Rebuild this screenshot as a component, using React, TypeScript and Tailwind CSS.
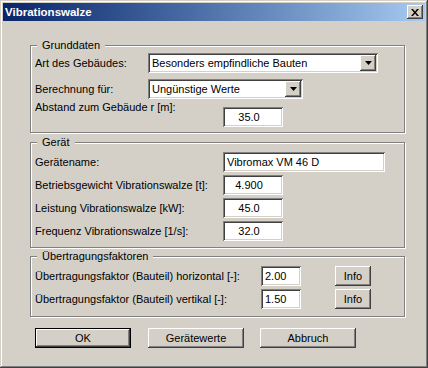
import React from 'react';

// Win2000 style 3D edges
const raised =
  'shadow-[inset_-1px_-1px_0_#404040,inset_1px_1px_0_#ffffff,inset_-2px_-2px_0_#808080,inset_2px_2px_0_#d4d0c8]';
const sunken =
  'shadow-[inset_1px_1px_0_#808080,inset_-1px_-1px_0_#ffffff,inset_2px_2px_0_#404040,inset_-2px_-2px_0_#d4d0c8]';

const Group = ({ title, className, children }: { title: string; className?: string; children: React.ReactNode }) => (
  <div
    className={`relative w-[375px] border border-[#808080] shadow-[1px_1px_0_#ffffff,inset_1px_1px_0_#ffffff] ${className ?? ''}`}
  >
    <span className="absolute -top-[8px] left-[6px] bg-[#d4d0c8] px-[5px] leading-[14px]">{title}</span>
    {children}
  </div>
);

const Field = ({ value, w, align = 'left' }: { value: string; w: string; align?: 'left' | 'center' }) => (
  <div
    className={`${w} h-[20px] bg-white ${sunken} flex items-center ${
      align === 'center' ? 'justify-center pr-[8px]' : 'pl-[4px]'
    }`}
  >
    {value}
  </div>
);

const Combo = ({ value, w }: { value: string; w: string }) => (
  <div className={`${w} h-[20px] bg-white ${sunken} flex items-center pl-[4px] pr-[2px]`}>
    <span className="flex-1">{value}</span>
    <div className={`w-[16px] h-[16px] bg-[#d4d0c8] ${raised} flex items-center justify-center`}>
      <svg width="7" height="4" viewBox="0 0 7 4">
        <path d="M0 0h7L3.5 4z" fill="#000" />
      </svg>
    </div>
  </div>
);

const Button = ({ label, isDefault }: { label: string; isDefault?: boolean }) =>
  isDefault ? (
    <div className="w-[96px] h-[20px] border border-black">
      <div className={`w-full h-full bg-[#d4d0c8] ${raised} flex items-center justify-center`}>{label}</div>
    </div>
  ) : (
    <div className={`w-[96px] h-[20px] bg-[#d4d0c8] ${raised} flex items-center justify-center`}>{label}</div>
  );

const InfoButton = () => (
  <div className="ml-[34px]">
    <div className={`w-[36px] h-[20px] bg-[#d4d0c8] ${raised} flex items-center justify-center`}>Info</div>
  </div>
);

const Row = ({ label, lw, className, children }: { label: string; lw: string; className?: string; children: React.ReactNode }) => (
  <div className={`flex items-center ${className ?? ''}`}>
    <span className={`${lw} shrink-0`}>{label}</span>
    {children}
  </div>
);

export default function App() {
  return (
    <div
      className="relative w-[428px] h-[368px] bg-[#d4d0c8] p-[3px] text-[11px] leading-[13px] text-black shadow-[inset_-1px_-1px_0_#404040,inset_1px_1px_0_#d4d0c8,inset_-2px_-2px_0_#808080,inset_2px_2px_0_#ffffff]"
      style={{ fontFamily: '"Liberation Sans", Arial, sans-serif' }}
    >
      {/* Title bar */}
      <div className="h-[18px] flex items-center justify-between pl-[2px] pr-[2px] bg-gradient-to-r from-[#0a246a] to-[#a6caf0]">
        <span className="text-white font-bold text-[11.5px]">Vibrationswalze</span>
        <div className={`w-[16px] h-[14px] bg-[#d4d0c8] ${raised} flex items-center justify-center`}>
          <svg width="8" height="7" viewBox="0 0 8 7">
            <path d="M0 0h2l2 2.5L6 0h2L5 3.5 8 7H6L4 4.5 2 7H0l3-3.5z" fill="#000" />
          </svg>
        </div>
      </div>

      <div className="pl-[27px] pt-[24px]">
        <Group title="Grunddaten" className="h-[88px] pl-[4px] pt-[7px]">
          <Row label="Art des Gebäudes:" lw="w-[113px]">
            <Combo value="Besonders empfindliche Bauten" w="w-[230px]" />
          </Row>
          <Row label="Berechnung für:" lw="w-[113px]" className="mt-[6px]">
            <Combo value="Ungünstige Werte" w="w-[155px]" />
          </Row>
          <div className="flex items-start mt-[8px]">
            <span className="w-[188px] shrink-0 -mt-[6px]">Abstand zum Gebäude r [m]:</span>
            <Field value="35.0" w="w-[60px]" align="center" />
          </div>
        </Group>

        <Group title="Gerät" className="mt-[9px] h-[106px] pl-[4px] pt-[9px]">
          <Row label="Gerätename:" lw="w-[188px]">
            <Field value="Vibromax VM 46 D" w="w-[162px]" />
          </Row>
          <Row label="Betriebsgewicht Vibrationswalze [t]:" lw="w-[188px]" className="mt-[3px]">
            <Field value="4.900" w="w-[60px]" align="center" />
          </Row>
          <Row label="Leistung Vibrationswalze [kW]:" lw="w-[188px]" className="mt-[3px]">
            <Field value="45.0" w="w-[60px]" align="center" />
          </Row>
          <Row label="Frequenz Vibrationswalze [1/s]:" lw="w-[188px]" className="mt-[3px]">
            <Field value="32.0" w="w-[60px]" align="center" />
          </Row>
        </Group>

        <Group title="Übertragungsfaktoren" className="mt-[8px] h-[61px] pl-[4px] pt-[9px]">
          <Row label="Übertragungsfaktor (Bauteil) horizontal [-]:" lw="w-[226px]">
            <Field value="2.00" w="w-[40px]" />
            <InfoButton />
          </Row>
          <Row label="Übertragungsfaktor (Bauteil) vertikal [-]:" lw="w-[226px]" className="mt-[3px]">
            <Field value="1.50" w="w-[40px]" />
            <InfoButton />
          </Row>
        </Group>

        <div className="flex mt-[11px] pl-[5px]">
          <Button label="OK" isDefault />
          <div className="ml-[17px]">
            <Button label="Gerätewerte" />
          </div>
          <div className="ml-[16px]">
            <Button label="Abbruch" />
          </div>
        </div>
      </div>
    </div>
  );
}
